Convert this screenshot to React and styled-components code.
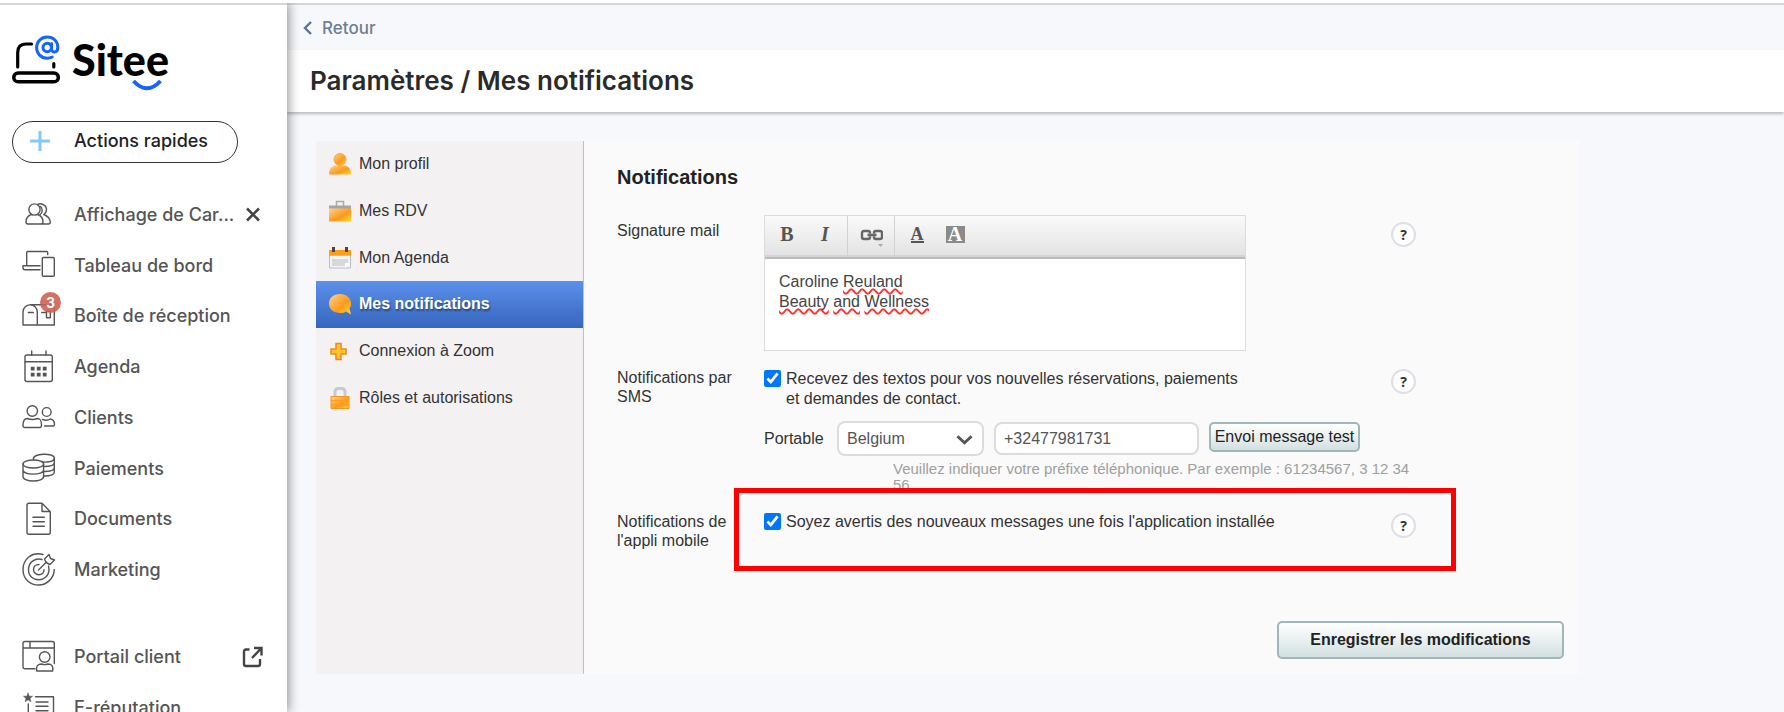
import React, {useState} from "react";
import styled, {createGlobalStyle} from "styled-components";


const GlobalStyle = createGlobalStyle`
  * {
    box-sizing: border-box;
  }

  body {
    margin: 0;
    font-family: "Liberation Sans", Arial, sans-serif;
    font-size: 16px;
    color: #333;
    background: #f7f8fb;
  }

  button, input, select {
    font: inherit;
    color: inherit;
    margin: 0;
  }
`
const Row = styled.div`
  display: flex;
  flex-direction: row;
`
const Column = styled.div`
  display: flex;
  flex-direction: column;
`
const Page = styled(Row)`
  height: 100vh;
  border-top: 3px solid #fff;
  overflow: hidden;
`
const Sidebar = styled.aside`
  flex: none;
  width: 287px;
  padding: 30px 24px 0 12px;
  background: #fff;
  border-top: 2px solid #d6d6d6;
  box-shadow: 2px 0 10px rgba(0, 0, 0, 0.4);
  font-family: Inter, sans-serif;
  z-index: 2;
`
const Logo = styled.a`
  display: inline-flex;
  height: 56px;
  color: #000;
  text-decoration: none;
  gap: 11px;
`
const LogoName = styled(Column)`
  font-family: Lato, sans-serif;
  font-weight: 900;
  font-size: 43px;
  line-height: 50px;
  position: relative;

  svg {
    position: absolute;
    right: 7px;
    bottom: 0;
  }
`
const QuickButton = styled.button`
  display: flex;
  align-items: center;
  gap: 24px;
  width: 226px;
  height: 42px;
  margin-top: 30px;
  padding: 0 0 3px 17px;
  background: #fff;
  border: 1px solid #333;
  border-radius: 21px;
  font-size: 18px;
  font-weight: 500;
  color: #222;
`
const MenuList = styled.ul`
  display: grid;
  grid-auto-rows: 1fr;
  height: ${({$height}) => $height};
  margin: ${({$top}) => $top} 0 0;
  padding: 0 0 0 10px;
  list-style: none;
`
const MenuItem = styled.li`
  display: flex;
  align-items: center;
  justify-content: space-between;
`
const MenuLink = styled.a`
  display: flex;
  align-items: center;
  gap: 18px;
  font-size: 18px;
  font-weight: 500;
  color: #555;
  text-decoration: none;
  white-space: nowrap;
`
const MenuIcon = styled.span`
  position: relative;
  width: 34px;
  height: 34px;
`
const Badge = styled.span`
  position: absolute;
  top: -7px;
  right: -5px;
  width: 21px;
  height: 21px;
  border-radius: 50%;
  background: rgba(204, 94, 80, 0.88);
  color: #fff;
  font-size: 14px;
  font-weight: bold;
  line-height: 21px;
  text-align: center;
`
const IconButton = styled.button`
  display: flex;
  padding: 0;
  background: none;
  border: none;
  color: #444;
`
const Main = styled.main`
  flex: 1;
  min-width: 0;
  border-top: 2px solid #d6d6d6;
`
const BackBar = styled.div`
  height: 45px;
  padding: 0 16px;
  font-family: Inter, sans-serif;
`
const BackLink = styled.a`
  display: inline-flex;
  align-items: center;
  gap: 9px;
  height: 45px;
  font-size: 17px;
  font-weight: 500;
  color: #6f7f90;
  text-decoration: none;
`
const TitleBar = styled.header`
  padding: 0 23px;
  background: #fff;
  box-shadow: 0 2px 3px rgba(0, 0, 0, 0.25);
`
const Title = styled.h1`
  margin: 0;
  font-family: Inter, sans-serif;
  font-size: 26px;
  font-weight: 600;
  line-height: 62px;
  color: #2a2a2a;
`
const Panel = styled(Row)`
  max-width: 1264px;
  min-height: 533px;
  margin: 29px 29px 38px;
  background: #fafafa;
`
const SettingsNav = styled.nav`
  flex: none;
  width: 268px;
  background: #f3f1f2;
  border-right: 1px solid #b4c6c6;
`
const SettingsList = styled.ul`
  display: grid;
  grid-auto-rows: 1fr;
  height: 280px;
  margin: 0;
  padding: 0;
  list-style: none;
`
const SettingsLink = styled.a`
  display: flex;
  align-items: center;
  gap: 8px;
  height: 100%;
  padding: 0 13px;
  text-decoration: none;
  color: ${({$active}) => $active ? '#fff' : '#333'};
  font-weight: ${({$active}) => $active ? 'bold' : 'normal'};
  text-shadow: ${({$active}) => $active ? '1px 2px 2px rgba(0, 0, 0, 0.45)' : 'none'};
  background: ${({$active}) => $active ? 'linear-gradient(#5b90ec, #3766bd)' : 'none'};
`
const Form = styled.form`
  flex: 1;
  min-width: 0;
  padding: 24px 16px 14px 33px;
`
const SectionTitle = styled.h2`
  margin: 0 0 26px;
  font-size: 20px;
  line-height: 24px;
  color: #222;
`
const FieldRow = styled.div`
  position: relative;
  display: grid;
  grid-template-columns: 147px minmax(0, 627px) 25px;
  align-items: start;
  max-width: 799px;
  margin-bottom: ${({$gap}) => $gap};
`
const FieldLabel = styled.div`
  width: 125px;
  padding-top: ${({$inset}) => $inset ? '6px' : '0'};
  line-height: 19px;
`
const HelpButton = styled.button`
  width: 25px;
  height: 25px;
  margin-top: ${({$inset}) => $inset ? '7px' : '1px'};
  padding: 0;
  background: #fff;
  border: 2px solid #dcdfe6;
  border-radius: 50%;
  font-family: "Open Sans", sans-serif;
  font-size: 14px;
  font-weight: bold;
  line-height: 20px;
  text-align: center;
`
const Editor = styled.div`
  width: 482px;
  height: 136px;
  border: 1px solid #dcdcdc;
  background: #fff;
`
const Toolbar = styled(Row)`
  height: 43px;
  background: linear-gradient(#fafafa, #e2e2e2);
  border-bottom: 2px solid #bbb;
  box-shadow: inset 0 -2px 0 #d4d4d4;
`
const ToolGroup = styled(Row)`
  padding: 0 3px;
  border-right: ${({$last}) => $last ? 'none' : '1px solid #d2d2d2'};
`
const ToolButton = styled.button`
  display: flex;
  align-items: center;
  justify-content: center;
  width: ${({$width}) => $width || '38px'};
  height: 37px;
  padding: 0;
  background: none;
  border: none;
  font-family: "Liberation Serif", "Times New Roman", serif;
  font-size: 20px;
  font-weight: bold;
  line-height: 17px;
  font-style: ${({$italic}) => $italic ? 'italic' : 'normal'};
  color: #555;
`
const ColorLetter = styled.span`
  width: 13px;
  border-bottom: 2px solid #555;
  font-size: 18px;
  line-height: 14px;
`
const BackgroundLetter = styled.span`
  width: 19px;
  height: 17px;
  background: #8a8a8a;
  color: #fff;
  font-size: 20px;
`
const EditorBody = styled.div`
  padding: 13px 14px;
  color: #444;
  line-height: 20px;
  outline: none;
`
const Misspelt = styled.span`
  text-decoration: underline wavy #ff3030 2px;
  text-underline-offset: 1px;
  text-decoration-skip-ink: none;
`
const CheckLabel = styled.label`
  display: flex;
  align-items: flex-start;
  gap: 5px;
  max-width: ${({$narrow}) => $narrow ? '480px' : 'none'};
  padding-top: ${({$narrow}) => $narrow ? '1px' : '0'};
  line-height: 20px;
`
const CheckBox = styled.input`
  flex: none;
  width: 17px;
  height: 17px;
  margin: 1px 0 0;
  accent-color: #0075ff;
`
const PhoneRow = styled(Row)`
  align-items: flex-start;
  margin-top: 12px;
`
const PhoneLabel = styled.label`
  width: 73px;
  line-height: 35px;
`
const SelectWrapper = styled.div`
  position: relative;
  width: 147px;

  svg {
    position: absolute;
    right: 11px;
    top: 13px;
    pointer-events: none;
  }
`
const Select = styled.select`
  appearance: none;
  width: 100%;
  height: 35px;
  padding: 0 8px;
  background: #fff;
  border: 2px solid #dcdcdc;
  border-radius: 8px;
  color: #555;
`
const PhoneInput = styled.input`
  width: 205px;
  height: 33px;
  margin: 1px 10px 0;
  padding: 0 8px;
  background: #fff;
  border: 2px solid #dcdcdc;
  border-radius: 8px;
  color: #555;
`
const Button = styled.button`
  height: ${({$large}) => $large ? '38px' : '30px'};
  width: ${({$large}) => $large ? '287px' : '151px'};
  margin-top: ${({$large}) => $large ? '0' : '1px'};
  padding: 0;
  border: 2px solid #9fb6bb;
  border-radius: 5px;
  background: linear-gradient(#fff, #d3e0e0);
  color: #222;
  font-weight: ${({$large}) => $large ? 'bold' : 'normal'};
  white-space: nowrap;
`
const Hint = styled.p`
  width: 524px;
  margin: 5px 0 0 129px;
  font-size: 15px;
  line-height: 16px;
  color: #a0a0a0;
`
const Highlight = styled.div`
  position: absolute;
  top: -24px;
  left: 117px;
  right: -40px;
  height: 83px;
  border: 5px solid #f00;
  pointer-events: none;
`
const Actions = styled(Row)`
  justify-content: flex-end;
`

const LineIcon = ({children}) => (
    <svg width="34" height="34" viewBox="0 0 34 34" fill="none" stroke="#555" strokeWidth="1.4"
         strokeLinecap="round" strokeLinejoin="round" aria-hidden="true">{children}</svg>
)

const menuIcons = {
    view: <>
        <circle cx="12.500" cy="12.500" r="5.600"/>
        <path d="M9.500 17.500C6 18.500 4 21.500 4 25q0 2 2 2h13q2 0 2-2c0-3.500-2-6.500-5.500-7.500"/>
        <path d="M15.500 7.600C19 5.500 24.500 8 24.500 12.500c0 2.200-1 4-2.800 5C25.500 18.700 28.300 22 28.300 25q0 2-2 2H20M18.500 9.500c2.500 2.500 2.200 6-.5 8.300"/>
    </>,
    dashboard: <>
        <path d="M4.700 17.500V4.500q0-1 1-1h19q1 0 1 1v2M18 17.700H1v2q0 2 2 2h15"/>
        <rect x="20.300" y="9.500" width="12" height="18.800" rx="1"/>
    </>,
    inbox: <>
        <path d="M1 26V13c0-9.500 14.300-9.500 14.300 0v13zM8 5.800h21c2.500 0 3.300 1.200 3.300 3.500V26h-17M6.300 13.500h5M19.700 13.500h4.500"/>
        <rect x="24.500" y="12.300" width="3.800" height="6.500"/>
    </>,
    agenda: <>
        <rect x="3" y="5" width="27.300" height="26.500" rx="2"/>
        <path d="M3 11.700h27.300M9.700 1v4M24 1v4"/>
        <path strokeWidth="3.800" strokeLinecap="butt"
              d="M8.800 18.700h3.800M14.800 18.700h3.800M20.800 18.700h3.800M8.800 24.700h3.800M14.800 24.700h3.800M20.800 24.700h3.800"/>
    </>,
    clients: <>
        <circle cx="10.300" cy="11" r="5.200"/>
        <circle cx="24.700" cy="12" r="4.400"/>
        <path d="M1 25.500c0-5 1-7 4.300-7 3.500 1.500 6.500 1.500 10 0 3.300 0 4.200 2 4.200 7q0 2-2 2H3q-2 0-2-2z"/>
        <path d="M20.500 19.500c2.500 1 5.500 1 8-.5 3 .5 4 2 4 5.500q0 1.500-1.500 1.500h-8.500"/>
    </>,
    payments: <>
        <ellipse cx="11.300" cy="13" rx="10.300" ry="4"/>
        <path d="M1 13v12.500c0 6 20.600 6 20.600 0V13M1 19c0 5.500 20.600 5.500 20.600 0"/>
        <path d="M11.500 8.500c-2-6.500 20.800-7 20.800-1.500 0 4.500-10.500 4.500-13 3.500M32.300 7v14c0 2.500-4 4-10 4M32.300 11.500c0 2.500-4 4-10 4M32.300 16.500c0 2.500-4 4-10 4"/>
    </>,
    documents: <>
        <path d="M7 1.200h13l8.300 8.500v20.500q0 2-2 2H7q-2 0-2-2v-27q0-2 2-2zM20 1.500v8h8"/>
        <path d="M11 15.200h11.300M11 19.700h11.300M11 24.200h11.300"/>
    </>,
    marketing: <>
        <path d="M21 1.500C10 -1.500 1 6 1 16.500S9 32 16.700 32s15.500-6.500 15.500-15.500"/>
        <path d="M20 6.500c-7-2-13.500 3-13.500 10s5 10.300 10.200 10.300S27 23 27 16.500l-.5-3.500"/>
        <path d="M17 11.500c-3.500 0-5.500 2.500-5.500 5s2 5.300 5.200 5.300 5.200-2 5.300-5M16.500 17l8-8M24 9.500l-1.500-3.500 4.500-4.500 1.500 4 4 1.500-4.500 4.500z"/>
    </>,
    portal: <>
        <path d="M13 28.700H3q-2 0-2-2V3.500q0-2 2-2h27.300q2 0 2 2v20M1 8h31.300M8 1.700V8"/>
        <circle cx="22.700" cy="17" r="5.300"/>
        <path d="M14.700 31c-.8-5 1-7 5-7 2 .8 4 .8 6 0 4 0 5.800 2 5 7z"/>
    </>,
    reviews: <>
        <path fill="#555" strokeWidth=".5" d="M6 2l1.200 3.200h3.400L8 7.400l1 3.400-3-2-3 2 1-3.400-2.600-2.200h3.400z"/>
        <path d="M13.500 5.800h18V33M6.300 13v20M14 11h12M14 15.300h12M14 19.700h12"/>
    </>,
}

const orange = "url(#orangeFill)"
const settingsIcons = {
    profile: <>
        <path d="M0 21.500c0-5 1.500-7.500 6-9h10c4.500 1.500 6 4 6 9z" fill={orange}/>
        <circle cx="11" cy="6.500" r="6" fill={orange} stroke="#f6a845"/>
    </>,
    bookings: <>
        <path d="M7.500 6V1.500h7V6" fill="none" stroke="#aaa" strokeWidth="1.500"/>
        <path d="M0 8h22v13.500H0z" fill={orange}/>
        <path d="M0 5.500h22v3H0z" fill="#a5a5a5"/>
    </>,
    calendar: <>
        <path d="M.5 8h21v13H.5z" fill="#f2f4f5" stroke="#b8bec2"/>
        <path d="M3 12h16v7H3z" fill="#d5d9dc"/>
        <path d="M0 3h22v5.500H0z" fill="#ff9c1a"/>
        <path d="M4.500 0v5M17.500 0v5" stroke="#445" strokeWidth="3"/>
        <path d="M16 21v-5h5z" fill="#fff"/>
    </>,
    bubble: <path d="M11 1C4.500 1 0 5 0 10.500S4.500 20 11 20c2.500 0 4.500-.5 6-1.500l5 3-1.500-6c1-1.500 1.500-3 1.500-5C22 5 17.500 1 11 1z" fill={orange}/>,
    plus: <path d="M7 3.500h5v5.500h5v5h-5v5.500H7V14H2V9h5z" fill="#ffc62b" stroke="#f08a1d" strokeWidth="1.500"/>,
    lock: <>
        <path d="M6 10V5q0-3.500 3.500-3.500h3Q16 1.500 16 5v5" fill="none" stroke="#c3cdd0" strokeWidth="3"/>
        <path d="M2 9.500h18v12H2z" fill={orange} stroke="#f8931d"/>
        <path d="M2 13.500h18M2 17.500h18" stroke="#ff9c20"/>
    </>,
}

const mainMenu = [
    {icon: 'view', label: 'Affichage de Car...', closable: true},
    {icon: 'dashboard', label: 'Tableau de bord'},
    {icon: 'inbox', label: 'Boîte de réception', count: 3},
    {icon: 'agenda', label: 'Agenda'},
    {icon: 'clients', label: 'Clients'},
    {icon: 'payments', label: 'Paiements'},
    {icon: 'documents', label: 'Documents'},
    {icon: 'marketing', label: 'Marketing'},
]
const secondMenu = [
    {icon: 'portal', label: 'Portail client', external: true},
    {icon: 'reviews', label: 'E-réputation'},
]
const settingsMenu = [
    {icon: 'profile', label: 'Mon profil'},
    {icon: 'bookings', label: 'Mes RDV'},
    {icon: 'calendar', label: 'Mon Agenda'},
    {icon: 'bubble', label: 'Mes notifications', active: true},
    {icon: 'plus', label: 'Connexion à Zoom'},
    {icon: 'lock', label: 'Rôles et autorisations'},
]

const Menu = ({items, height, top}) => (
    <MenuList $height={height} $top={top}>
        {items.map(({icon, label, count, closable, external}) => (
            <MenuItem key={icon}>
                <MenuLink href="#">
                    <MenuIcon>
                        <LineIcon>{menuIcons[icon]}</LineIcon>
                        {count && <Badge>{count}</Badge>}
                    </MenuIcon>
                    {label}
                </MenuLink>
                {closable && <IconButton type="button" aria-label="Fermer">
                    <svg width="18" height="15" viewBox="0 0 18 15" stroke="currentColor" strokeWidth="2.600">
                        <path d="M2 1.500l12 12M14 1.500l-12 12"/>
                    </svg>
                </IconButton>}
                {external && <IconButton type="button" aria-label="Ouvrir">
                    <svg width="22" height="22" viewBox="0 0 22 22" fill="none" stroke="currentColor"
                         strokeWidth="2.400">
                        <path d="M8.500 3.500H5q-2 0-2 2V18q0 2 2 2h12q2 0 2-2v-5M13 2h7.500v7.500M20.500 2L11 12"/>
                    </svg>
                </IconButton>}
            </MenuItem>
        ))}
    </MenuList>
)

const LogoComponent = () => (
    <Logo href="#" aria-label="Sitee">
        <svg width="49" height="49" viewBox="0 0 49 49" fill="none" strokeLinecap="round">
            <g stroke="#000" strokeWidth="3.200">
                <path d="M5.700 32V17.500Q5.700 9 14 9h5.500M41.800 28.500v3.500"/>
                <rect x="1.800" y="38" width="44.500" height="8.800" rx="4.400" strokeWidth="3.600"/>
            </g>
            <g stroke="#1464ff" strokeWidth="3">
                <circle cx="35.200" cy="12.500" r="4.200"/>
                <path d="M39.600 8.500v5.500c0 4.500 6.200 4 6.200-1.500C45.800 6 41 1.900 35.200 1.900S24.600 6.500 24.600 12.500 29 23.200 35.200 23.200c2 0 3.500-.5 5-1.200"/>
            </g>
        </svg>
        <LogoName>
            Sitee
            <svg width="30" height="12" viewBox="0 0 30 12" fill="none" stroke="#1464ff" strokeWidth="4">
                <path d="M1.500 2q13.500 14.500 27 0"/>
            </svg>
        </LogoName>
    </Logo>
)

const SidebarComponent = () => (
    <Sidebar>
        <LogoComponent/>
        <QuickButton type="button">
            <svg width="20" height="20" viewBox="0 0 20 20" stroke="#85c8fb" strokeWidth="3">
                <path d="M10 0v20M0 10h20"/>
            </svg>
            Actions rapides
        </QuickButton>
        <Menu items={mainMenu} height="406px" top="26px"/>
        <Menu items={secondMenu} height="102px" top="36px"/>
    </Sidebar>
)

const SettingsMenu = () => (
    <SettingsNav>
        <SettingsList>
            {settingsMenu.map(({icon, label, active}) => (
                <li key={icon}>
                    <SettingsLink href="#" $active={active}>
                        <svg width="22" height="22" viewBox="0 0 22 22" aria-hidden="true">
                            <defs>
                                <linearGradient id="orangeFill" x1="0" y1="0" x2="1" y2="1">
                                    <stop offset="0" stopColor="#ffd898"/>
                                    <stop offset=".35" stopColor="#fdb048"/>
                                    <stop offset=".6" stopColor="#fb9a1c"/>
                                    <stop offset="1" stopColor="#ffd92a"/>
                                </linearGradient>
                            </defs>
                            {settingsIcons[icon]}
                        </svg>
                        {label}
                    </SettingsLink>
                </li>
            ))}
        </SettingsList>
    </SettingsNav>
)

const SignatureEditor = () => (
    <Editor>
        <Toolbar>
            <ToolGroup>
                <ToolButton type="button" aria-label="Gras">B</ToolButton>
                <ToolButton type="button" aria-label="Italique" $italic>I</ToolButton>
            </ToolGroup>
            <ToolGroup>
                <ToolButton type="button" aria-label="Lien" $width="40px">
                    <svg width="24" height="26" viewBox="0 0 24 26" fill="none" stroke="#666" strokeWidth="2.400">
                        <path d="M11 11.500V11q0-2-2-2H5q-2 0-2 2v4q0 2 2 2h4q2 0 2-2V14.500M15 11.500V11q0-2 2-2h4q2 0 2 2v4q0 2-2 2h-4q-2 0-2-2V14.500M8.500 13h9"/>
                        <path d="M19 22h5l-2.500 3z" fill="#aaa" stroke="none"/>
                    </svg>
                </ToolButton>
            </ToolGroup>
            <ToolGroup $last>
                <ToolButton type="button" aria-label="Couleur du texte"><ColorLetter>A</ColorLetter></ToolButton>
                <ToolButton type="button" aria-label="Couleur de fond"><BackgroundLetter>A</BackgroundLetter></ToolButton>
            </ToolGroup>
        </Toolbar>
        <EditorBody role="textbox" aria-multiline="true" aria-labelledby="signature-label"
                    contentEditable suppressContentEditableWarning spellCheck={false}>
            <div>Caroline <Misspelt>Reuland</Misspelt></div>
            <div><Misspelt>Beauty</Misspelt> <Misspelt>and</Misspelt> <Misspelt>Wellness</Misspelt></div>
        </EditorBody>
    </Editor>
)

const PhoneFields = () => {
    const [phone, setPhone] = useState('+32477981731')
    return (<>
        <PhoneRow>
            <PhoneLabel htmlFor="phone">Portable</PhoneLabel>
            <SelectWrapper>
                <Select aria-label="Pays" defaultValue="be">
                    <option value="be">Belgium</option>
                    <option value="fr">France</option>
                </Select>
                <svg width="17" height="12" viewBox="0 0 18 12" fill="none" stroke="#555" strokeWidth="3">
                    <path d="M1.500 2L9 9l7.500-7"/>
                </svg>
            </SelectWrapper>
            <PhoneInput id="phone" type="tel" value={phone} onChange={(e) => setPhone(e.target.value)}/>
            <Button type="button">Envoi message test</Button>
        </PhoneRow>
        <Hint>Veuillez indiquer votre préfixe téléphonique. Par exemple : 61234567, 3 12 34 56</Hint>
    </>)
}

const NotificationsForm = () => (
    <Form onSubmit={(e) => e.preventDefault()}>
        <SectionTitle>Notifications</SectionTitle>
        <FieldRow $gap="17px">
            <FieldLabel id="signature-label" $inset>Signature mail</FieldLabel>
            <SignatureEditor/>
            <HelpButton type="button" $inset>?</HelpButton>
        </FieldRow>
        <FieldRow $gap="19px">
            <FieldLabel>Notifications par SMS</FieldLabel>
            <div>
                <CheckLabel $narrow>
                    <CheckBox type="checkbox" defaultChecked/>
                    Recevez des textos pour vos nouvelles réservations, paiements et demandes de contact.
                </CheckLabel>
                <PhoneFields/>
            </div>
            <HelpButton type="button">?</HelpButton>
        </FieldRow>
        <FieldRow $gap="71px">
            <FieldLabel>Notifications de l'appli mobile</FieldLabel>
            <CheckLabel>
                <CheckBox type="checkbox" defaultChecked/>
                Soyez avertis des nouveaux messages une fois l'application installée
            </CheckLabel>
            <HelpButton type="button">?</HelpButton>
            <Highlight/>
        </FieldRow>
        <Actions>
            <Button type="submit" $large>Enregistrer les modifications</Button>
        </Actions>
    </Form>
)

const App = () => (
    <>
        <GlobalStyle/>
        <Page>
            <SidebarComponent/>
            <Main>
                <BackBar>
                    <BackLink href="#">
                        <svg width="10" height="14" viewBox="0 0 10 14" fill="none" stroke="#5c7590" strokeWidth="2.400">
                            <path d="M8 1L2 7l6 6"/>
                        </svg>
                        Retour
                    </BackLink>
                </BackBar>
                <TitleBar>
                    <Title>Paramètres / Mes notifications</Title>
                </TitleBar>
                <Panel>
                    <SettingsMenu/>
                    <NotificationsForm/>
                </Panel>
            </Main>
        </Page>
    </>
)
export default App;
